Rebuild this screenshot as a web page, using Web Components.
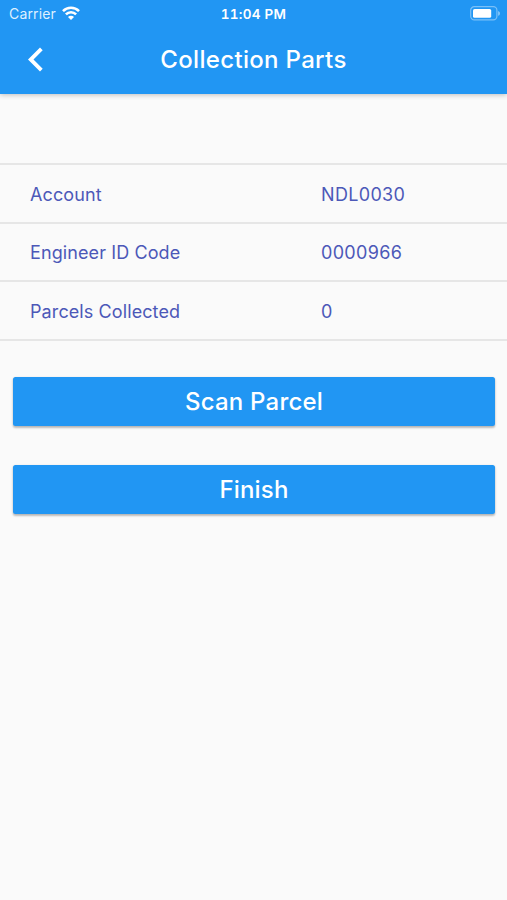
<!DOCTYPE html>
<html lang="en">
<head>
<meta charset="utf-8">
<title>Collection Parts</title>
<style>
body { margin: 0; background: #fafafa; font-family: Inter, Roboto, sans-serif; }
</style>
</head>
<body>
<parts-screen></parts-screen>
<script>
const define = (name, html) => customElements.define(name, class extends HTMLElement {
  constructor() {
    super();
    this.attachShadow({ mode: "open" }).innerHTML = html;
  }
});

define("status-bar", `
<style>
:host { display: grid; grid-template-columns: 1fr auto 1fr; align-items: center; height: 27px; box-sizing: border-box; padding: 0 9px 0 9px; color: #fff; font-size: 14px; line-height: 27px; }
.left { display: flex; align-items: center; gap: 6px; }
.carrier { color: #def0ff; letter-spacing: .15px; }
.time { font-weight: 600; font-size: 13.5px; line-height: 26px; padding-top: 1px; letter-spacing: .25px; font-variant-numeric: tabular-nums; }
.battery { justify-self: end; margin-right: -2px; }
svg { display: block; }
.wifi { margin-top: -1px; }
</style>
<div class="left"><span class="carrier">Carrier</span>
<svg class="wifi" width="18" height="14" viewBox="0 0 18 14" fill="none" stroke="#fff" stroke-width="2.6"><path d="M1 5.1a11.4 11.4 0 0 1 16 0"/><path d="M3.9 8.4a7.2 7.2 0 0 1 10.2 0"/><path d="M9 13.9 6 10.9a4.2 4.2 0 0 1 6 0z" fill="#fff" stroke="none"/></svg></div>
<span class="time">11:04 PM</span>
<svg class="battery" width="30" height="15" viewBox="0 0 30 15"><rect x=".7" y=".7" width="26.2" height="13.2" rx="3.6" fill="none" stroke="#fff" stroke-opacity=".4" stroke-width="1.2"/><rect x="3" y="2.9" width="18.2" height="8.9" rx="1.6" fill="#fff"/><path d="M28.2 5v4.8c1-.4 1.7-1.3 1.7-2.4S29.2 5.4 28.2 5z" fill="#fff" fill-opacity=".5"/></svg>`);

define("app-bar", `
<style>
:host { display: grid; grid-template-columns: 80px 1fr 80px; align-items: center; height: 66px; color: #fff; }
h1 { margin: 0; text-align: center; font-size: 24px; font-weight: 500; line-height: 30px; letter-spacing: .32px; white-space: nowrap; }
svg { display: block; margin: 0 0 2px 28px; }
</style>
<svg width="15" height="25" viewBox="0 0 15 25"><path d="M12 .5 14.7 3.2 5.5 12.5 14.7 21.7 12 24.4 0 12.5z" fill="#fff"/></svg>
<h1><slot></slot></h1>`);

define("detail-row", `
<style>
:host { display: grid; grid-template-columns: 291px 1fr; align-items: center; height: 58.67px; box-sizing: border-box; padding: 2.4px 0 0 30px; border-bottom: 2px solid #e6e6e6; color: #4c58b8; font-size: 18px; line-height: 24px; letter-spacing: .33px; }
::slotted([slot="label"]) { letter-spacing: .1px; }
</style>
<slot name="label"></slot><slot name="value"></slot>`);

define("raised-button", `
<style>
:host { display: block; }
button { display: block; width: 100%; height: 49px; padding: 0; border: 0; border-radius: 2.5px; background: #2196f3; color: #fff; font: 500 24px/49px Inter, Roboto, sans-serif; letter-spacing: .2px; box-shadow: 0 1.5px 2px rgba(0,0,0,.2), 0 1px 3px rgba(0,0,0,.12); }
</style>
<button><slot></slot></button>`);

define("parts-screen", `
<style>
:host { display: flex; flex-direction: column; min-height: 900px; background: #fafafa; }
header { height: 94px; background: #2196f3; box-shadow: 0 1px 5px rgba(0,0,0,.24); }
.details { margin-top: 69px; border-top: 2px solid #e6e6e6; }
.actions { display: flex; flex-direction: column; gap: 39px; padding: 36px 12px 0 13px; }
</style>
<header><status-bar></status-bar><app-bar>Collection Parts</app-bar></header>
<section class="details">
<detail-row><span slot="label">Account</span><span slot="value">NDL0030</span></detail-row>
<detail-row><span slot="label">Engineer ID Code</span><span slot="value">0000966</span></detail-row>
<detail-row><span slot="label">Parcels Collected</span><span slot="value">0</span></detail-row>
</section>
<section class="actions"><raised-button>Scan Parcel</raised-button><raised-button>Finish</raised-button></section>`);
</script>
</body>
</html>
